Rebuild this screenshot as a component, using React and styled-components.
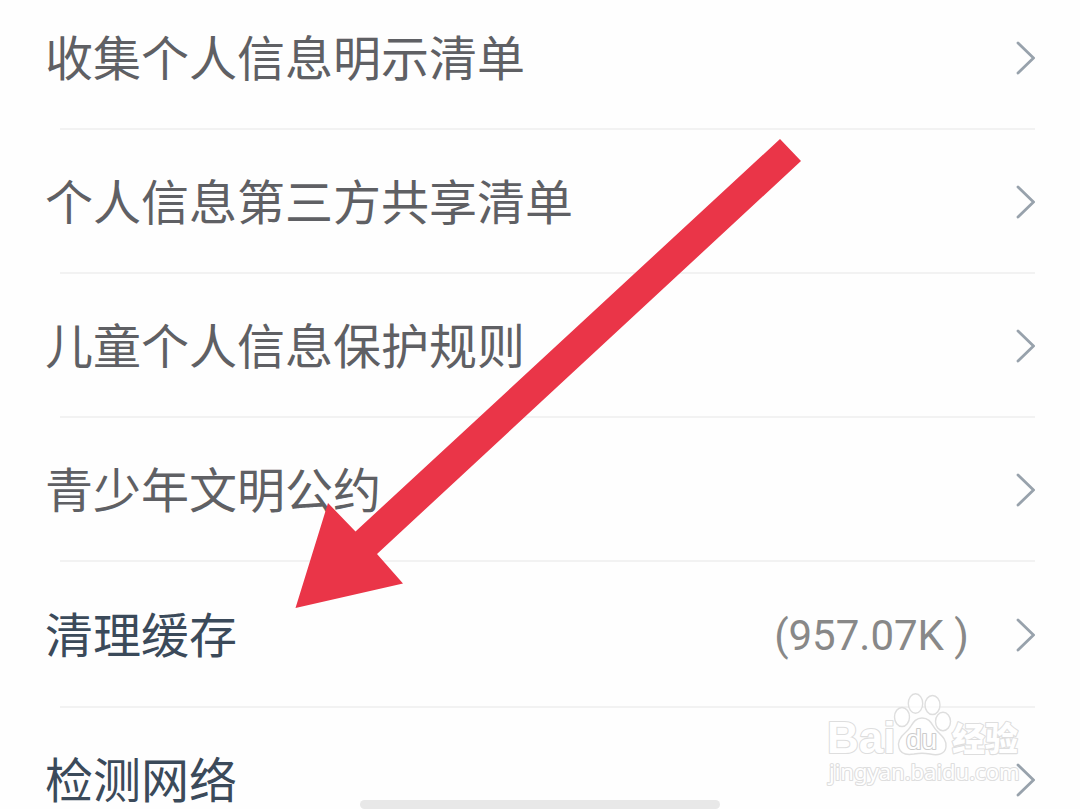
import React from "react";
import styled, { createGlobalStyle } from "styled-components";

const GlobalStyle = createGlobalStyle`
  body {
    margin: 0;
    background-color: #fefefe;
    font-family: "Noto Sans CJK SC", sans-serif;
  }
`;

const Page = styled.main`
  position: relative;
  height: 100vh;
  overflow: hidden;
`;

// the page is scrolled a little past the top of the first row
const List = styled.ul`
  list-style: none;
  margin: -14px 0 0;
  padding: 0;
`;

const Item = styled.li`
  &::after {
    content: "";
    display: block;
    height: 2px;
    margin: 0 45px 0 60px;
    background-color: #f2f2f2;
  }
`;

const Row = styled.a`
  box-sizing: border-box;
  display: flex;
  align-items: center;
  height: ${(props) => (props.$tall ? "144px" : "142px")};
  padding: 2px 45px 0;
  color: ${(props) => (props.$dark ? "#3b4a5a" : "#5f6064")};
  text-decoration: none;
`;

const Label = styled.span`
  flex: 1;
  padding-bottom: 6px;
  font-size: 48px;
  line-height: 72px;
`;

const Value = styled.span`
  margin-right: 46px;
  padding-top: 2px;
  color: #888888;
  font-family: Roboto, sans-serif;
  font-size: 42px;
  line-height: 52px;
`;

const ChevronIcon = styled.svg`
  display: block;
  width: 20px;
  height: 36px;
  fill: none;
  stroke: #98a2ac;
  stroke-width: 2.8;
  stroke-linecap: round;
`;

const Arrow = styled.svg`
  position: absolute;
  top: 138px;
  left: 295px;
  width: 507px;
  height: 471px;
  fill: #ea3548;
  pointer-events: none;
`;

const Watermark = styled.svg`
  position: absolute;
  right: 50px;
  bottom: 19px;
  width: 210px;
  height: 100px;
  fill: rgba(255, 255, 255, 0.7);
  stroke: #dedede;
  stroke-width: 1.4;
  stroke-linejoin: round;
  pointer-events: none;

  text {
    fill: #ffffff;
    stroke-width: 2.2;
    paint-order: stroke;
  }
`;

const HomeBar = styled.div`
  position: absolute;
  bottom: 0;
  left: 50%;
  width: 360px;
  height: 9px;
  margin-left: -180px;
  border-radius: 5px;
  background-color: #e8e8e8;
`;

const rows = [
  { label: "收集个人信息明示清单" },
  { label: "个人信息第三方共享清单" },
  { label: "儿童个人信息保护规则" },
  { label: "青少年文明公约" },
  { label: "清理缓存", value: "(957.07K )", dark: true, tall: true },
  { label: "检测网络", dark: true },
];

const Chevron = () => (
  <ChevronIcon viewBox="0 0 20 36" aria-hidden="true">
    <path d="M3 3 L18.5 18 L3 33" />
  </ChevronIcon>
);

const App = () => {
  return (
    <Page>
      <GlobalStyle />
      <List>
        {rows.map((row) => (
          <Item key={row.label}>
            <Row href="#" $dark={row.dark} $tall={row.tall}>
              <Label>{row.label}</Label>
              {row.value && <Value>{row.value}</Value>}
              <Chevron />
            </Row>
          </Item>
        ))}
      </List>
      <Watermark viewBox="0 0 200 100" preserveAspectRatio="xMinYMin">
        <text
          x="7"
          y="63"
          fontSize="44"
          fontWeight="700"
          fontFamily="Liberation Sans, sans-serif"
        >
          Bai
        </text>
        <ellipse cx="82" cy="27" rx="7.5" ry="9.5" />
        <ellipse cx="95.5" cy="13.5" rx="7.2" ry="9.8" />
        <ellipse cx="112.5" cy="15" rx="7.5" ry="9.5" />
        <ellipse cx="123" cy="31.5" rx="7.5" ry="9.2" />
        <path d="M102 28 C93 28 92 37 86 42 C80 47 77 52 79 58 C81 65 88 65 94 64 C99 63 105 63 110 64 C118 66 125 64 126 57 C127 50 122 46 117 41 C112 36 111 28 102 28 Z" />
        <text
          x="86"
          y="59"
          fontSize="28"
          stroke="#cccccc"
          fontFamily="Liberation Sans, sans-serif"
        >
          du
        </text>
        <text
          x="132"
          y="61"
          fontSize="33"
          fontWeight="900"
          fontFamily="Noto Sans CJK SC, sans-serif"
        >
          经验
        </text>
        <text x="9" y="90" fontSize="22" fontFamily="Noto Sans, sans-serif">
          jingyan.baidu.com
        </text>
      </Watermark>
      <Arrow viewBox="295 138 507 471" aria-hidden="true">
        <path d="M295.5 608 L328 503 L355.5 531.5 L780 139 L801 161 L377 554 L403 583.5 Z" />
      </Arrow>
      <HomeBar />
    </Page>
  );
};

export default App;
